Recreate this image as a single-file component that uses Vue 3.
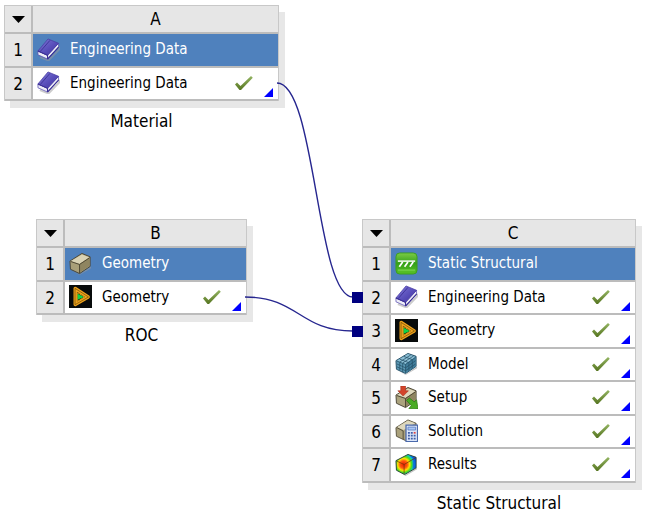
<script setup>
const systems = [
  {
    id: 'a', letter: 'A', caption: 'Material', left: 4, top: 5, width: 275,
    rows: [
      { label: 'Engineering Data', icon: 'book' },
      { label: 'Engineering Data', icon: 'book' },
    ],
  },
  {
    id: 'b', letter: 'B', caption: 'ROC', left: 36, top: 219, width: 211,
    rows: [
      { label: 'Geometry', icon: 'solid' },
      { label: 'Geometry', icon: 'spaceclaim' },
    ],
  },
  {
    id: 'c', letter: 'C', caption: 'Static Structural', left: 362, top: 219, width: 274,
    rows: [
      { label: 'Static Structural', icon: 'static' },
      { label: 'Engineering Data', icon: 'book' },
      { label: 'Geometry', icon: 'spaceclaim' },
      { label: 'Model', icon: 'mesh' },
      { label: 'Setup', icon: 'setup' },
      { label: 'Solution', icon: 'solution' },
      { label: 'Results', icon: 'results' },
    ],
  },
]

const place = (s) => ({ left: s.left + 'px', top: s.top + 'px', width: s.width + 'px' })
</script>

<template>
  <main class="schematic">
    <svg class="defs" width="0" height="0" aria-hidden="true">
      <defs>
        <linearGradient id="g-book" x1="0" y1="0" x2="1" y2="1">
          <stop offset="0" stop-color="#837dd8" /><stop offset=".5" stop-color="#5c52bd" /><stop offset="1" stop-color="#3c2f9c" />
        </linearGradient>
        <linearGradient id="g-green" x1="0" y1="0" x2="0" y2="1">
          <stop offset="0" stop-color="#7ccb45" /><stop offset=".5" stop-color="#35a018" /><stop offset="1" stop-color="#58c226" />
        </linearGradient>
        <linearGradient id="g-check" x1="0" y1="0" x2="0" y2="1">
          <stop offset="0" stop-color="#94b563" /><stop offset="1" stop-color="#567520" />
        </linearGradient>
        <radialGradient id="g-hot" gradientUnits="userSpaceOnUse" cx="9" cy="12" r="14">
          <stop offset="0" stop-color="#f01800" /><stop offset=".28" stop-color="#ff5a10" />
          <stop offset=".44" stop-color="#ffe000" /><stop offset=".6" stop-color="#48dc20" />
          <stop offset=".78" stop-color="#00c8e0" /><stop offset="1" stop-color="#0830d8" />
        </radialGradient>
        <symbol id="i-book" viewBox="0 0 24 24">
          <path d="m3 20 9 3.500L23 12V9" fill="none" stroke="#999" stroke-width="2" opacity=".5" />
          <path d="M1 13.500v4L11 22 22.500 9.500v-4L11 18Z" fill="#eeeef7" stroke="#5a50b0" stroke-width=".8" />
          <path d="M1 13.500 11.500 1 22.500 5.500 11 18Z" fill="url(#g-book)" stroke="#4a3ea6" stroke-width=".8" stroke-linejoin="round" />
          <path d="M1 13.500 11 18v4" fill="none" stroke="#3a2f94" stroke-width="1.200" />
          <path d="m3.500 14 10-11.500" fill="none" stroke="#3a2f94" stroke-width=".9" />
          <path d="M11 22 22.500 9.500" fill="none" stroke="#3a2f94" stroke-width="1.200" />
        </symbol>
        <symbol id="i-solid" viewBox="0 0 24 24">
          <path d="m2 19 9 4.500L23 15v2l-12 7Z" fill="#999" opacity=".6" />
          <path d="m1 9.500 12.500-8L22 5v10l-11 7.500L1.500 18Z" fill="#a99f78" stroke="#4b4636" stroke-linejoin="round" />
          <path d="m2 9.500 11.500-7L21 5.500 11 12.500Z" fill="#d9d2b4" />
          <path d="M11 12.500V21.500l10.500-7V6Z" fill="#8f8560" />
          <path d="m2 10 9 3 10.500-7M11 13v9" fill="none" stroke="#4d4733" />
        </symbol>
        <symbol id="i-spaceclaim" viewBox="0 0 24 24">
          <path d="M0 0h24v24H0Z" fill="#080b0b" />
          <path d="M6.500 3.700v16.600L20 12.500Z" fill="none" stroke="#eea21c" stroke-width="3.600" stroke-linejoin="round" />
          <path d="M6.300 3.500v17L20.300 12.500Z" fill="none" stroke="#6b4700" stroke-width=".7" stroke-linejoin="round" />
          <path d="M9 8v9l7-4.500Z" fill="#06120a" stroke="#e09a16" stroke-width="1" />
          <path d="M9 9v6.500l6.500-3Z" fill="#10d348" />
        </symbol>
        <symbol id="i-static" viewBox="0 0 24 24">
          <rect x="1" y="1" width="22" height="22" rx="4" fill="url(#g-green)" stroke="#3c9e20" />
          <path d="M3 9.500h18" stroke="#fff" stroke-width="1.500" />
          <path d="m8 10.500-3.500 5M13.500 10.500l-3.500 5M19 10.500l-3.500 5" stroke="#fff" stroke-width="1.800" />
          <path d="M3 19h18" stroke="#8be45d" stroke-width="2" opacity=".5" />
        </symbol>
        <symbol id="i-mesh" viewBox="0 0 24 24">
          <path d="m3 19 8 4.500L23 15v2l-12 7Z" fill="#999" opacity=".6" />
          <path d="m1 9 12.500-7.500L22 4.500v10.500l-11 7.500L1.500 18Z" fill="#5a97b3" stroke="#29536a" stroke-linejoin="round" />
          <path d="m2 9 11.500-7L21 5 11 12.500Z" fill="#8dbfd5" />
          <path d="M11 12.500V22l10.500-7V5.500Z" fill="#417e9c" />
          <path d="m2 9.500 9 3.500L21.500 5.500M2 12.500l9 4L21.500 9M2 15.500l9 4 10.500-7M5 11v8m3-7v9m3-8v9m3.500-11.500V19.500m3.500-11v9M5 7.500l9 3.500M9 4.500l9 3.500M5 10.500 16.500 3M8 11.500 19.500 4" fill="none" stroke="#265269" stroke-width=".8" />
        </symbol>
        <symbol id="i-setup" viewBox="0 0 24 24">
          <path d="m1 9.500 12.500-8L22 5v10l-11 7.500L1.500 18Z" fill="#aba37e" stroke="#4b4636" stroke-linejoin="round" />
          <path d="m2 9.500 11.500-7L21 5.500 11 12.500Z" fill="#ded8bd" />
          <path d="M11 12.500V21.500l10.500-7V6Z" fill="#8f8560" />
          <path d="m2 10 9 3 10.500-7M11 13v9" fill="none" stroke="#4d4733" />
          <path d="M6 0h5v5h3L8.500 10.500 3 5h3Z" fill="#d3452b" stroke="#a52e1b" stroke-width=".6" />
          <path d="m12 15 3-2.500 5 4 2.500-2L24 24l-9.500-.5 2.500-3Z" fill="#4aab25" stroke="#2c7d14" stroke-width=".8" />
        </symbol>
        <symbol id="i-solution" viewBox="0 0 24 24">
          <path d="m1 9 12.500-8L22 4.500V15l-11 7.500L1.500 18Z" fill="#aaa17b" stroke="#5a5441" stroke-linejoin="round" />
          <path d="m2 8.500 11.500-7 7.500 3L9 11.500Z" fill="#ded8bd" />
          <path d="m2 9 6.500 3.500V21" fill="none" stroke="#554e39" />
          <path d="M11.500 6.500h12v17h-12Z" fill="#dde7fa" stroke="#4a69ac" stroke-width="1.300" />
          <path d="M13.500 8.500h8v3h-8Z" fill="#a9c6f5" stroke="#5678bc" stroke-width=".8" />
          <path d="M13.500 13.500h2v1.800h-2Zm3 0h2v1.800h-2Zm-3 3h2v1.800h-2Zm3 0h2v1.800h-2Zm3 0h2v1.800h-2Zm-6 3h2v1.800h-2Zm3 0h2v1.800h-2Zm3 0h2v1.800h-2Z" fill="#3f5ea6" />
          <path d="M19.500 13.500h2v1.800h-2Z" fill="#d44" />
        </symbol>
        <symbol id="i-results" viewBox="0 0 24 24">
          <path d="m3 19 7 4.500L23 15v2l-12 7Z" fill="#999" opacity=".6" />
          <path d="m1 8 12.500-6.500L22 4.500v11L10 22.500 1.500 18Z" fill="url(#g-hot)" stroke="#27422e" stroke-linejoin="round" />
          <path d="m15 2.500 6.500 2.500v10l-3 2V6Z" fill="#1244d8" opacity=".6" />
          <path d="m2 8.500 7.500 3.500L21.500 5M9.500 12v10" fill="none" stroke="#703b08" stroke-width=".8" />
        </symbol>
      </defs>
    </svg>

    <svg class="wires" aria-hidden="true">
      <path d="M277 83C316 83 316 297 353 297" />
      <path d="M245 297C299 297 299 331 353 331" />
      <rect x="352" y="292" width="11" height="11" />
      <rect x="352" y="326" width="11" height="11" />
    </svg>

    <figure v-for="s in systems" :key="s.id" class="system" :style="place(s)">
      <table :aria-labelledby="'caption-' + s.id">
        <thead>
          <tr>
            <th class="num">
              <button type="button" :aria-label="'System ' + s.letter + ' menu'">
                <svg width="13" height="7" viewBox="0 0 13 7"><path d="M0 0h13L6.500 7Z" /></svg>
              </button>
            </th>
            <th scope="col">{{ s.letter }}</th>
          </tr>
        </thead>
        <tbody>
          <tr v-for="(row, i) in s.rows" :key="i" :class="{ title: i === 0 }">
            <th class="num" scope="row">{{ i + 1 }}</th>
            <td>
              <div class="cell">
                <svg class="icon" viewBox="0 0 24 24" aria-hidden="true"><use :href="'#i-' + row.icon" /></svg>
                <span class="label">{{ row.label }}</span>
                <template v-if="i > 0">
                  <svg class="check" viewBox="0 0 18 14" aria-hidden="true">
                    <path d="M0 8.500 2 6.500l3.500 3.500L16 0l1.800 1.800L6 14H4.500Z" fill="url(#g-check)" />
                  </svg>
                  <svg class="corner" viewBox="0 0 9 9" aria-hidden="true"><path d="M9 0v9H0Z" /></svg>
                </template>
              </div>
            </td>
          </tr>
        </tbody>
      </table>
      <figcaption :id="'caption-' + s.id">{{ s.caption }}</figcaption>
    </figure>
  </main>
</template>

<style>
body {
  margin: 0;
  background: #fff;
}
</style>

<style scoped>
.schematic {
  position: relative;
  min-height: 100vh;
  overflow: hidden;
  color: #000;
  font-family: Tahoma, "DejaVu Sans Condensed", "DejaVu Sans", sans-serif;
  font-size: 15px;
  line-height: 20px;
}
.defs {
  position: absolute;
}
.wires {
  position: absolute;
  inset: 0;
  z-index: 1;
  width: 100%;
  height: 100%;
  pointer-events: none;
}
.wires path {
  fill: none;
  stroke: #26268f;
  stroke-width: 1.4;
}
.wires rect {
  fill: #000080;
}
.system {
  position: absolute;
  margin: 0;
}
table {
  box-sizing: border-box;
  width: 100%;
  table-layout: fixed;
  border-collapse: separate;
  border-spacing: 0;
  border: 1px solid #c8c8c8;
  border-bottom: 0;
  box-shadow: 6px 7px 0 #e7e7e7;
}
th,
td {
  box-sizing: border-box;
  padding: 0;
  border-bottom: 2px solid #bcbcbc;
  font-weight: 400;
  vertical-align: middle;
}
th {
  height: 28px;
  background: #e6e6e6;
  font-size: 17px;
  text-align: center;
}
.num {
  width: 28px;
  border-right: 2px solid #bcbcbc;
}
tbody tr {
  height: 33px;
}
tbody tr:nth-child(odd) {
  height: 34px;
}
td {
  background: #fff;
}
.title td {
  background: #4f81bd;
  color: #fff;
}
button {
  display: flex;
  width: 100%;
  justify-content: center;
  padding: 0;
  border: 0;
  background: none;
}
.cell {
  display: flex;
  box-sizing: border-box;
  align-items: center;
  height: 30px;
  padding: 0 5px 2px 4px;
}
.icon {
  flex: none;
  width: 23px;
  height: 23px;
}
.label {
  flex: 1;
  margin-left: 10px;
  white-space: nowrap;
}
.check {
  width: 18px;
  height: 14px;
}
.corner {
  align-self: flex-end;
  width: 9px;
  height: 9px;
  margin-left: 11px;
  fill: #0000ff;
}
figcaption {
  margin-top: 10px;
  font-size: 17px;
  text-align: center;
}
</style>
